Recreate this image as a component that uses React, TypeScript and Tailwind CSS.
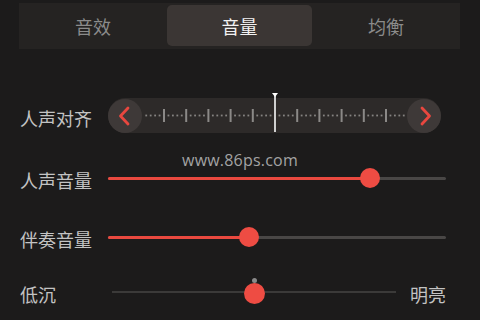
import type { ReactNode } from 'react';

const tabs = ['音效', '音量', '均衡'];

const TICK_START = 22;
const TICK_GAP = 22.2;

const Chevron = ({ dir }: { dir: 'left' | 'right' }) => (
    <svg width="12" height="20" viewBox="0 0 12 20" fill="none">
        <path
            d={dir === 'left' ? 'M10 2 L2.5 10 L10 18' : 'M2 2 L9.5 10 L2 18'}
            stroke="#e8473f"
            strokeWidth="2.8"
            strokeLinecap="round"
            strokeLinejoin="round"
        />
    </svg>
);

const Ruler = () => {
    const ticks = Array.from({ length: 11 }, (_, k) => TICK_START + TICK_GAP * k);
    const dots: number[] = [];
    for (let j = 1; j <= 4; j++) dots.push(TICK_START - 4.44 * j);
    ticks.forEach(t => {
        for (let j = 1; j <= 4; j++) dots.push(t + 4.44 * j);
    });

    return (
        <svg width="265" height="35" viewBox="0 0 265 35" className="overflow-visible">
            {dots.map((x, i) => (
                <rect key={i} x={x - 0.9} y={16.6} width="1.8" height="1.8" fill="#858381" />
            ))}
            {ticks.map((x, i) =>
                i === 5 ? null : (
                    <rect key={i} x={x - 1} y={11} width="2" height="13" fill="#8b8987" />
                )
            )}
            <rect x={132} y={-3} width="2" height="37" fill="#cfcfcf" />
            <path d="M130 -5 L136 -5 L133 -1 Z" fill="#ffffff" />
        </svg>
    );
};

const Slider = ({ value }: { value: number }) => (
    <div className="relative flex-1 h-[24px] flex items-center">
        <div className="w-full h-[3px] bg-[#494746] rounded-full" />
        <div
            className="absolute left-0 h-[3px] bg-[#e9493f] rounded-full"
            style={{ width: `${value}%` }}
        />
        <div
            className="absolute w-[20px] h-[20px] -ml-[10px] rounded-full bg-[#ee4c43]"
            style={{ left: `${value}%` }}
        />
    </div>
);

const Row = ({ label, children, className }: { label: string; children: ReactNode; className: string }) => (
    <div className={`flex items-center pl-[20px] pr-[34px] ${className}`}>
        <span className="w-[88px] text-[18px] leading-none text-[#c3c3c3] translate-y-[2px]">{label}</span>
        {children}
    </div>
);

export default function App() {
    return (
        <div
            className="relative w-[480px] h-[320px] bg-[#1c1b1b] overflow-hidden"
            style={{ fontFamily: '"Noto Sans CJK SC", "Noto Sans", sans-serif' }}
        >
            <div className="mt-[3px] mx-[19px] w-[441px] h-[46px] bg-[#252322] grid grid-cols-[148px_145px_148px] items-stretch pt-[2px] pb-[3px]">
                {tabs.map((t, i) => (
                    <div
                        key={t}
                        className={`flex items-center justify-center text-[18px] leading-none rounded-[5px] ${
                            i === 1 ? 'bg-[#3b3634] text-[#f2f2f2]' : 'text-[#8b8b8b]'
                        }`}
                    >
                        {t}
                    </div>
                ))}
            </div>

            <Row label="人声对齐" className="mt-[49px] !pr-[39px]">
                <div className="flex-1 h-[35px] rounded-full bg-[#2d2a29] flex items-center">
                    <div className="w-[34px] h-[34px] rounded-full bg-[#3e3938] flex items-center justify-center pr-[3px]">
                        <Chevron dir="left" />
                    </div>
                    <Ruler />
                    <div className="w-[34px] h-[34px] rounded-full bg-[#3e3938] flex items-center justify-center pl-[3px]">
                        <Chevron dir="right" />
                    </div>
                </div>
            </Row>

            <div className="absolute left-0 right-0 top-[148px] text-center text-[16px] text-[#a3a3a3] tracking-[0.2px]" style={{ fontFamily: '"Open Sans", sans-serif' }}>
                www.86ps.com
            </div>

            <Row label="人声音量" className="mt-[33px]">
                <Slider value={77.6} />
            </Row>

            <Row label="伴奏音量" className="mt-[35px]">
                <Slider value={41.7} />
            </Row>

            <div className="flex items-center pl-[20px] pr-[34px] mt-[31px]">
                <span className="w-[92px] text-[18px] leading-none text-[#c3c3c3] translate-y-[2px]">低沉</span>
                <div className="relative flex-1 h-[24px] flex items-center">
                    <div className="w-full h-[2px] bg-[#3b3a39]" />
                    <div className="absolute left-1/2 -ml-[2px] -top-[2px] w-[5px] h-[5px] rounded-full bg-[#8a8a8a]" />
                    <div className="absolute left-1/2 -ml-[10px] w-[21px] h-[21px] rounded-full bg-[#ee4c43] translate-y-[1px]" />
                </div>
                <span className="pl-[14px] text-[18px] leading-none text-[#c3c3c3] translate-y-[2px]">明亮</span>
            </div>
        </div>
    );
}
